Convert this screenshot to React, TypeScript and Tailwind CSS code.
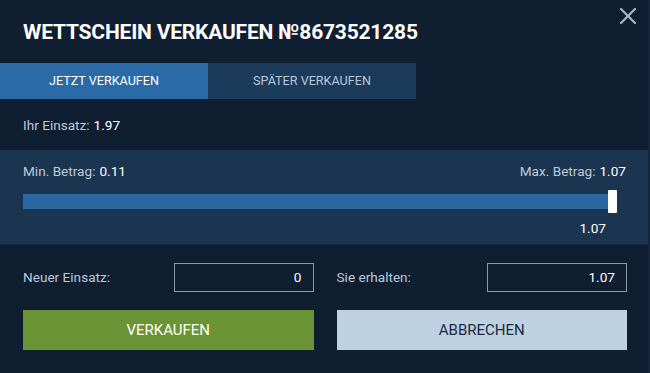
import React from "react";
import { X } from "lucide-react";

type FieldProps = { label: string; value: string };

function Field({ label, value }: FieldProps) {
  return (
    <div className="flex items-center justify-between">
      <span className="text-[13.6px] text-[#bccad8]">{label}</span>
      <div className="flex h-[29px] w-[140px] items-center justify-end border border-[#8a9bb0] px-[11px] text-[13.6px] text-white">
        {value}
      </div>
    </div>
  );
}

export default function App() {
  const min = 0.11;
  const max = 1.07;
  const value = 1.07;
  const pct = ((value - min) / (max - min)) * 100;

  return (
    <div className="relative h-[373px] w-[650px] overflow-hidden bg-[#0f1e31] font-['Roboto','Liberation_Sans',sans-serif] text-white">
      {/* header */}
      <div className="flex h-[63px] items-center px-[23px] pt-[3px]">
        <h1 className="text-[21px] font-bold tracking-[-0.2px] text-white">WETTSCHEIN VERKAUFEN №8673521285</h1>
      </div>
      <button className="absolute right-[8px] top-[2px] text-[#aab6c2]">
        <X size={28} strokeWidth={1.9} />
      </button>

      {/* tabs */}
      <div className="flex h-[36px]">
        <div className="flex w-[208px] items-center justify-center bg-[#2a6aa6] text-[12.6px] text-white">
          JETZT VERKAUFEN
        </div>
        <div className="flex w-[208px] items-center justify-center bg-[#1c3a59] text-[12.6px] text-[#b7c9dc]">
          SPÄTER VERKAUFEN
        </div>
      </div>

      {/* stake */}
      <div className="flex h-[51px] items-center px-[23px] pt-[2px] text-[13.6px]">
        <span className="text-[#bccad8]">Ihr Einsatz:</span>
        <span className="ml-1 text-white">1.97</span>
      </div>

      {/* slider */}
      <div className="h-[95px] border-b border-[#142740] bg-[#1b3450] px-[23px] pt-[11px]">
        <div className="flex justify-between text-[13.6px]">
          <div>
            <span className="text-[#bccad8]">Min. Betrag:</span>
            <span className="ml-1">0.11</span>
          </div>
          <div className="pr-[1px]">
            <span className="text-[#bccad8]">Max. Betrag:</span>
            <span className="ml-1">1.07</span>
          </div>
        </div>
        <div className="relative mr-[14px] mt-[13px] h-[15px] bg-[#16304d]">
          <div className="h-full bg-[#2b67a2]" style={{ width: `${pct}%` }} />
          <div className="absolute right-[-4px] top-[-4px] h-[23px] w-[9px] rounded-[1px] bg-white" />
        </div>
        <div className="mt-[9px] pr-[21px] text-right text-[13.6px]">1.07</div>
      </div>

      {/* inputs */}
      <div className="grid grid-cols-2 gap-[23px] px-[23px] pt-[18px]">
        <Field label="Neuer Einsatz:" value="0" />
        <Field label="Sie erhalten:" value="1.07" />
      </div>

      {/* buttons */}
      <div className="grid grid-cols-2 gap-[23px] px-[23px] pt-[18px]">
        <button className="h-[40px] bg-[#6a9433] text-[15px] text-white">VERKAUFEN</button>
        <button className="h-[40px] bg-[#bed1e2] text-[15px] text-[#1b2b3e]">ABBRECHEN</button>
      </div>

      <div className="absolute right-0 top-0 h-full w-[2px] bg-[#16263a]" />
    </div>
  );
}
